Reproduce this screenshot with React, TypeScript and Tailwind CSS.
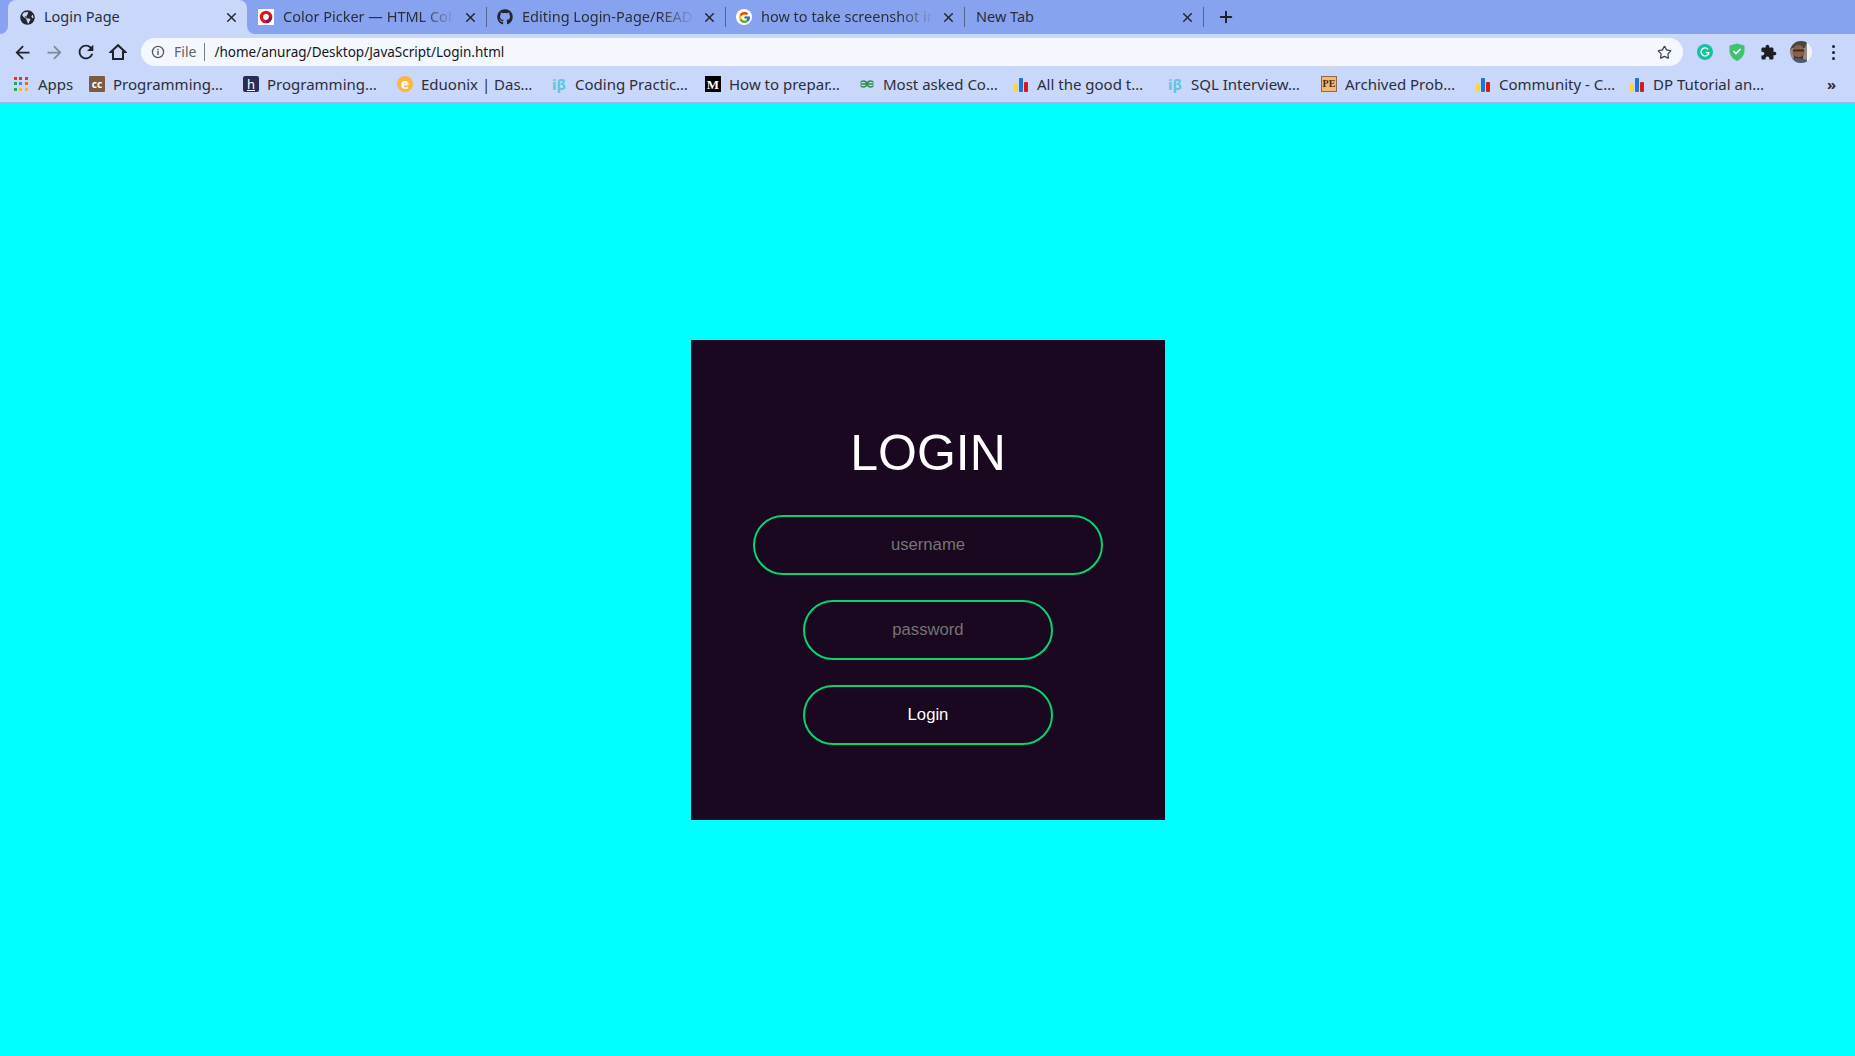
import React from "react";
import { Star, X, Plus } from "lucide-react";
import { FaGlobeAmericas, FaGithub } from "react-icons/fa";
import { FcGoogle } from "react-icons/fc";

const ui = "font-['Noto_Sans','Open_Sans',sans-serif]";

function PickerIcon() {
  return (
    <span className="flex h-4 w-4 items-center justify-center bg-white">
      <svg width="14" height="14" viewBox="0 0 14 14">
        <circle cx="7" cy="7" r="4.6" fill="none" stroke="#e0141e" strokeWidth="3.4" />
        <path d="M7 11.6A4.6 4.6 0 0 0 11.6 7" fill="none" stroke="#7a1a5a" strokeWidth="3.4" />
      </svg>
    </span>
  );
}

function GoogleIcon() {
  return (
    <span className="flex h-4 w-4 items-center justify-center rounded-full bg-white">
      <FcGoogle size={13} />
    </span>
  );
}

function Tab({ icon, title, active, fade, className }: { icon?: React.ReactNode; title: string; active?: boolean; fade?: boolean; className: string }) {
  return (
    <div className={`relative flex h-[34px] shrink-0 items-center rounded-t-lg pr-[8px] ${active ? "bg-[#c9d7fa]" : ""} ${className}`}>
      {active && (
        <>
          <span className="absolute bottom-0 left-[-8px] h-2 w-2 bg-[#c9d7fa]">
            <span className="block h-2 w-2 rounded-br-lg bg-[#87a2ee]" />
          </span>
          <span className="absolute bottom-0 right-[-8px] h-2 w-2 bg-[#c9d7fa]">
            <span className="block h-2 w-2 rounded-bl-lg bg-[#87a2ee]" />
          </span>
        </>
      )}
      {icon && <span className="mr-[9px] flex h-4 w-4 shrink-0 items-center justify-center">{icon}</span>}
      <span className={`mb-[2px] min-w-0 flex-1 overflow-hidden whitespace-nowrap text-[14.5px] leading-[22px] text-[#2b2f3a] ${fade ? "[mask-image:linear-gradient(to_right,black_78%,transparent_98%)]" : ""}`}>
        {title}
      </span>
      <X size={15} strokeWidth={2.4} className="ml-1 shrink-0 text-[#23262e]" />
    </div>
  );
}

function Sep() {
  return <span className="h-5 w-px shrink-0 bg-[#56648f]" />;
}

function IconSlot({ children }: { children: React.ReactNode }) {
  return <span className="flex h-8 w-8 shrink-0 items-center justify-center">{children}</span>;
}

function Bars() {
  return (
    <span className="flex h-4 w-4 items-end justify-center gap-px">
      <span className="h-[9px] w-[4px] rounded-[1px] bg-[#fdd63a]" />
      <span className="h-[14px] w-[4px] rounded-[1px] bg-[#1976d2]" />
      <span className="h-[10px] w-[4px] rounded-[1px] bg-[#dd1616]" />
    </span>
  );
}

function Beta() {
  return <span className="whitespace-nowrap text-[15px] font-bold leading-none text-[#62c5dc]">iβ</span>;
}

function Cc() {
  return (
    <span className="flex h-4 w-4 items-center justify-center rounded-[1px] bg-[#7b5c40] text-[10px] font-bold leading-none text-white">cc</span>
  );
}

function Hackr() {
  return (
    <span className="flex h-4 w-4 items-center justify-center rounded-[2px] bg-[#2c2a57]">
      <span className="border-b border-white text-[13px] leading-[12px] text-white">h</span>
    </span>
  );
}

function Edu() {
  return (
    <span className="flex h-4 w-4 items-center justify-center rounded-full bg-[#fbb63f] pb-px text-[14px] font-bold leading-none text-white">e</span>
  );
}

function Medium() {
  return (
    <span className="flex h-4 w-4 items-center justify-center bg-black font-['Liberation_Serif',serif] text-[13px] font-bold leading-none text-white">M</span>
  );
}

function Gfg() {
  return (
    <svg width="16" height="16" viewBox="0 0 16 16" fill="none" stroke="#2f8d46" strokeWidth="1.3">
      <path d="M1.5 8H14.5M8 8C7.5 6 6 5 4.5 5C3.2 5 2 5.6 1.5 6.5M8 8C7.5 10 6 11 4.5 11C3.2 11 2 10.4 1.5 9.5M8 8C8.5 6 10 5 11.5 5C12.8 5 14 5.6 14.5 6.5M8 8C8.5 10 10 11 11.5 11C12.8 11 14 10.4 14.5 9.5" />
    </svg>
  );
}

function Pe() {
  return (
    <span className="flex h-4 w-4 items-center justify-center border border-[#8a6a48] bg-[#f4b874] font-['Liberation_Serif',serif] text-[10px] font-bold leading-none text-[#4a2c10]">PE</span>
  );
}

function Apps() {
  const colors = ["bg-[#ea3323]", "bg-[#ea3323]", "bg-[#ea3323]", "bg-[#1da851]", "bg-[#4285f4]", "bg-[#f26522]", "bg-[#1da851]", "bg-[#fbbc05]", "bg-[#fbbc05]"];
  return (
    <span className="grid h-[14px] w-[14px] grid-cols-3 gap-[2px]">
      {colors.map((c, i) => (
        <span key={i} className={`h-[3px] w-[3px] ${c}`} />
      ))}
    </span>
  );
}

function Mark({ icon, label }: { icon: React.ReactNode; label: string }) {
  return (
    <div className="flex w-[154px] shrink-0 items-center">
      <span className="mr-[8px] flex h-4 w-4 shrink-0 items-center justify-center">{icon}</span>
      <span className="whitespace-nowrap text-[15px] leading-none text-[#2b2f3a]">{label}</span>
    </div>
  );
}

function Avatar() {
  return (
    <svg width="22" height="22" viewBox="0 0 22 22">
      <defs>
        <clipPath id="av">
          <circle cx="11" cy="11" r="11" />
        </clipPath>
      </defs>
      <g clipPath="url(#av)">
        <rect width="22" height="22" fill="#f5f3f2" />
        <rect x="0" y="0" width="17" height="22" fill="#8f8a86" />
        <path d="M0 0H17L15 7H2L0 10Z" fill="#4d4540" />
        <ellipse cx="8.5" cy="11" rx="6" ry="7" fill="#8d5f45" />
        <rect x="3" y="8.5" width="11" height="2" fill="#3a2c26" />
        <path d="M4 14C6 17 11 17 13 14L13 18H4Z" fill="#41342d" />
        <path d="M0 22V18C4 17 12 17 17 19V22Z" fill="#4a5a78" />
      </g>
    </svg>
  );
}

export default function App() {
  return (
    <div className={`flex h-screen w-full flex-col overflow-hidden bg-[#00ffff] ${ui}`}>
      <div className="flex h-[34px] shrink-0 items-center bg-[#87a2ee] pl-2">
        <Tab active className="w-[239px] pl-[11px]" icon={<FaGlobeAmericas size={15} className="text-[#23262e]" />} title="Login Page" />
        <Tab fade className="w-[239px] pl-[11px]" icon={<PickerIcon />} title="Color Picker — HTML Col" />
        <Sep />
        <Tab fade className="w-[238px] pl-[10px]" icon={<FaGithub size={16} className="text-[#23262e]" />} title="Editing Login-Page/READ" />
        <Sep />
        <Tab fade className="w-[238px] pl-[10px]" icon={<GoogleIcon />} title="how to take screenshot in" />
        <Sep />
        <Tab className="w-[238px] pl-[11px]" title="New Tab" />
        <Sep />
        <Plus size={18} strokeWidth={2.6} className="ml-[13px] text-[#1e2128]" />
      </div>

      <div className="flex h-9 shrink-0 items-center bg-[#c9d7fa] pl-[6px]">
        <IconSlot>
          <svg width="21" height="21" viewBox="0 0 24 24" fill="#1f222a"><path d="M20 11H7.83l5.59-5.59L12 4l-8 8 8 8 1.41-1.41L7.83 13H20v-2z" /></svg>
        </IconSlot>
        <IconSlot>
          <svg width="21" height="21" viewBox="0 0 24 24" fill="#82889b"><path d="M12 4l-1.41 1.41L16.17 11H4v2h12.17l-5.58 5.59L12 20l8-8z" /></svg>
        </IconSlot>
        <IconSlot>
          <svg width="22" height="22" viewBox="0 0 24 24" fill="#1f222a"><path d="M17.65 6.35C16.2 4.9 14.21 4 12 4c-4.42 0-7.99 3.58-7.99 8s3.57 8 7.99 8c3.73 0 6.84-2.55 7.73-6h-2.08c-.82 2.33-3.04 4-5.65 4-3.31 0-6-2.69-6-6s2.69-6 6-6c1.66 0 3.14.69 4.22 1.78L13 11h7V4l-2.35 2.35z" /></svg>
        </IconSlot>
        <IconSlot>
          <svg width="18" height="18" viewBox="0 0 18 18" fill="none" stroke="#1f222a" strokeWidth="2" strokeLinejoin="miter">
            <path d="M9 2.2L1.8 9H4V16H14V9H16.2Z" />
          </svg>
        </IconSlot>
        <div className="ml-[7px] flex h-7 w-[1542px] shrink-0 items-center rounded-full bg-[#f4f7fe] pl-[10px] pr-[10px]">
          <svg width="14" height="14" viewBox="0 0 14 14" className="shrink-0" fill="none">
            <circle cx="7" cy="7" r="5.6" stroke="#55585f" strokeWidth="1.3" />
            <rect x="6.3" y="6" width="1.4" height="4" fill="#55585f" />
            <rect x="6.3" y="3.8" width="1.4" height="1.4" fill="#55585f" />
          </svg>
          <span className="ml-[9px] text-[14px] leading-none text-[#5f6368]">File</span>
          <span className="ml-[8px] h-[18px] w-px bg-[#7a7d85]" />
          <span className="ml-[9px] mt-px whitespace-nowrap text-[13.5px] leading-none text-[#15171c]">/home/anurag/Desktop/JavaScript/Login.html</span>
          <Star size={15} strokeWidth={2} className="ml-auto mr-[1px] text-[#41444c]" />
        </div>
        <div className="ml-[14px] flex items-center">
          <span className="flex h-8 w-8 items-center justify-start">
            <svg width="16" height="16" viewBox="0 0 16 16">
              <circle cx="8" cy="8" r="8" fill="#15c39a" />
              <path d="M11 5.2A4 4 0 1 0 12 8.6H8.8" fill="none" stroke="#fff" strokeWidth="1.3" />
            </svg>
          </span>
          <span className="flex h-8 w-8 items-center justify-start">
            <svg width="16" height="18" viewBox="0 0 16 18">
              <path d="M0.5 2.5L8 0.5L15.5 2.5V8C15.5 12.5 12 16 8 18C4 16 0.5 12.5 0.5 8Z" fill="#3ec36f" />
              <path d="M4.5 8L7 10.5L11.5 6" fill="none" stroke="#fff" strokeWidth="1.6" />
            </svg>
          </span>
          <span className="flex h-8 w-8 items-center justify-start">
            <svg width="17" height="17" viewBox="0 0 24 24" fill="#1c1e24" className="ml-[-1px]">
              <path d="M20.5 11H19V7c0-1.1-.9-2-2-2h-4V3.5C13 2.12 11.88 1 10.5 1S8 2.12 8 3.5V5H4c-1.1 0-1.99.9-1.99 2v3.8H3.5c1.49 0 2.7 1.21 2.7 2.7s-1.21 2.7-2.7 2.7H2V20c0 1.1.9 2 2 2h3.8v-1.5c0-1.49 1.21-2.7 2.7-2.7 1.49 0 2.7 1.21 2.7 2.7V22H17c1.1 0 2-.9 2-2v-4h1.5c1.38 0 2.5-1.12 2.5-2.5S21.88 11 20.5 11z" />
            </svg>
          </span>
          <span className="flex h-8 w-8 items-center justify-start">
            <span className="ml-[-3px]"><Avatar /></span>
          </span>
          <span className="flex h-8 w-4 flex-col items-center justify-center gap-[3px]">
            <span className="h-[3px] w-[3px] rounded-full bg-[#1f222a]" />
            <span className="h-[3px] w-[3px] rounded-full bg-[#1f222a]" />
            <span className="h-[3px] w-[3px] rounded-full bg-[#1f222a]" />
          </span>
        </div>
      </div>

      <div className="flex h-[33px] shrink-0 items-center border-b border-[#9fb4e6] bg-[#c9d7fa] pb-[4px] pl-[14px]">
        <div className="flex w-[75px] shrink-0 items-center">
          <span className="mr-[10px] flex w-[14px] items-center justify-center"><Apps /></span>
          <span className="text-[15px] leading-none text-[#2b2f3a]">Apps</span>
        </div>
        <Mark icon={<Cc />} label="Programming…" />
        <Mark icon={<Hackr />} label="Programming…" />
        <Mark icon={<Edu />} label="Eduonix | Das…" />
        <Mark icon={<Beta />} label="Coding Practic…" />
        <Mark icon={<Medium />} label="How to prepar…" />
        <Mark icon={<Gfg />} label="Most asked Co…" />
        <Mark icon={<Bars />} label="All the good t…" />
        <Mark icon={<Beta />} label="SQL Interview…" />
        <Mark icon={<Pe />} label="Archived Prob…" />
        <Mark icon={<Bars />} label="Community - C…" />
        <Mark icon={<Bars />} label="DP Tutorial an…" />
        <span className="ml-[44px] text-[15px] font-bold leading-none text-[#2b2f3a]">»</span>
      </div>

      <main className="flex flex-1 items-center justify-center pl-px font-['Liberation_Sans',Arial,sans-serif]">
        <form className="flex h-[480px] w-[474px] flex-col items-center bg-[#1a0720] pt-[83px]">
          <h1 className="mb-[32px] h-[60px] text-[50px] font-normal leading-[60px] text-white">LOGIN</h1>
          <input
            placeholder="username"
            className="mb-[25px] h-[60px] w-[350px] rounded-[30px] border-2 border-[#04d56f] bg-transparent text-center text-[16.67px] text-white outline-none placeholder:text-[#757575]"
          />
          <input
            placeholder="password"
            className="mb-[25px] h-[60px] w-[250px] rounded-[30px] border-2 border-[#04d56f] bg-transparent text-center text-[16.67px] text-white outline-none placeholder:text-[#757575]"
          />
          <button
            type="button"
            className="h-[60px] w-[250px] rounded-[30px] border-2 border-[#04d56f] bg-transparent text-center text-[16.67px] text-white"
          >
            Login
          </button>
        </form>
      </main>
    </div>
  );
}
